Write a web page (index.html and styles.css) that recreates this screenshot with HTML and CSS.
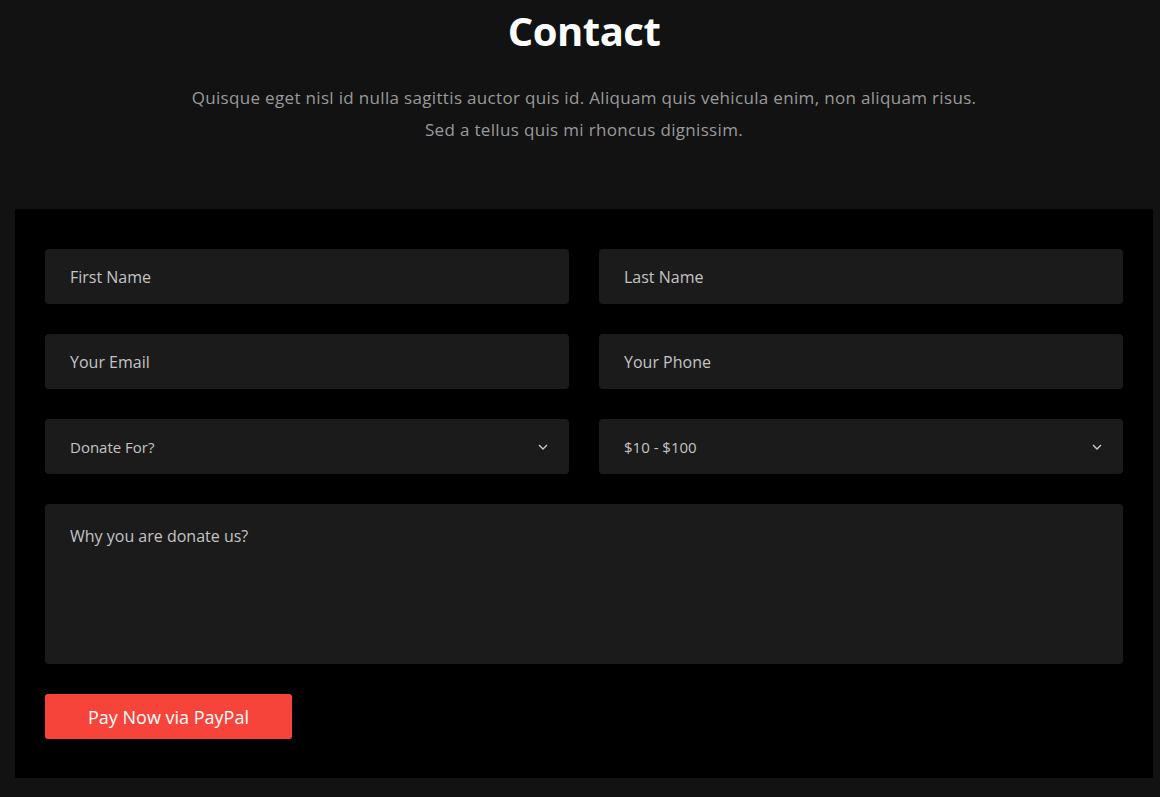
FILE: index.html
```html
<!DOCTYPE html>
<html lang="en">
<head>
<meta charset="utf-8">
<title>Contact</title>
<link rel="stylesheet" href="styles.css">
</head>
<body>
<section class="contact">
  <header class="intro">
    <h1 class="title">Contact</h1>
    <p class="lead">Quisque eget nisl id nulla sagittis auctor quis id. Aliquam quis vehicula enim, non aliquam risus.<br>Sed a tellus quis mi rhoncus dignissim.</p>
  </header>
  <form class="form-box">
    <div class="grid">
      <div class="field">First Name</div>
      <div class="field">Last Name</div>
      <div class="field">Your Email</div>
      <div class="field">Your Phone</div>
      <div class="field select"><span>Donate For?</span>
        <svg class="chev" width="10" height="6" viewBox="0 0 10 6"><path d="M1 1l4 4 4-4" fill="none" stroke="#c8c8c8" stroke-width="1.4"/></svg>
      </div>
      <div class="field select"><span>$10 - $100</span>
        <svg class="chev" width="10" height="6" viewBox="0 0 10 6"><path d="M1 1l4 4 4-4" fill="none" stroke="#c8c8c8" stroke-width="1.4"/></svg>
      </div>
      <div class="field area">Why you are donate us?</div>
    </div>
    <button type="button" class="pay">Pay Now via PayPal</button>
  </form>
</section>
</body>
</html>
```
FILE: styles.css
```css
html, body {
  margin: 0;
  padding: 0;
  background: #121212;
}
body {
  font-family: "Open Sans", "Liberation Sans", sans-serif;
  color: #c8c8c8;
  width: 1160px;
  height: 797px;
  overflow: hidden;
}
.contact {
  padding: 0 7px 0 15px;
}
.intro {
  text-align: center;
  padding-top: 6px;
  height: 209px;
  box-sizing: border-box;
}
.title {
  margin: 0;
  font-size: 40px;
  line-height: 50px;
  font-weight: 700;
  color: #ffffff;
  letter-spacing: -0.5px;
}
.lead {
  margin: 26px 0 0;
  font-size: 17px;
  line-height: 32px;
  letter-spacing: 0.33px;
  color: #9a9a9a;
}
.form-box {
  background: #000;
  padding: 40px 30px 39px;
  display: flex;
  flex-direction: column;
  gap: 30px;
  align-items: flex-start;
}
.grid {
  display: grid;
  grid-template-columns: 1fr 1fr;
  gap: 30px;
  width: 100%;
}
.field {
  height: 55px;
  background: #1b1b1b;
  border-radius: 4px;
  padding: 0 25px;
  display: flex;
  align-items: center;
  font-size: 16px;
  color: #c4c4c4;
}
.select {
  justify-content: space-between;
  font-size: 15px;
  padding-right: 21px;
}
.area {
  grid-column: 1 / 3;
  height: 160px;
  align-items: flex-start;
  padding-top: 21px;
  box-sizing: border-box;
}
.pay {
  width: 247px;
  height: 45px;
  border: none;
  border-radius: 3px;
  background: #f6443a;
  color: #fff;
  font-family: inherit;
  font-size: 18px;
  padding: 0;
}
```
